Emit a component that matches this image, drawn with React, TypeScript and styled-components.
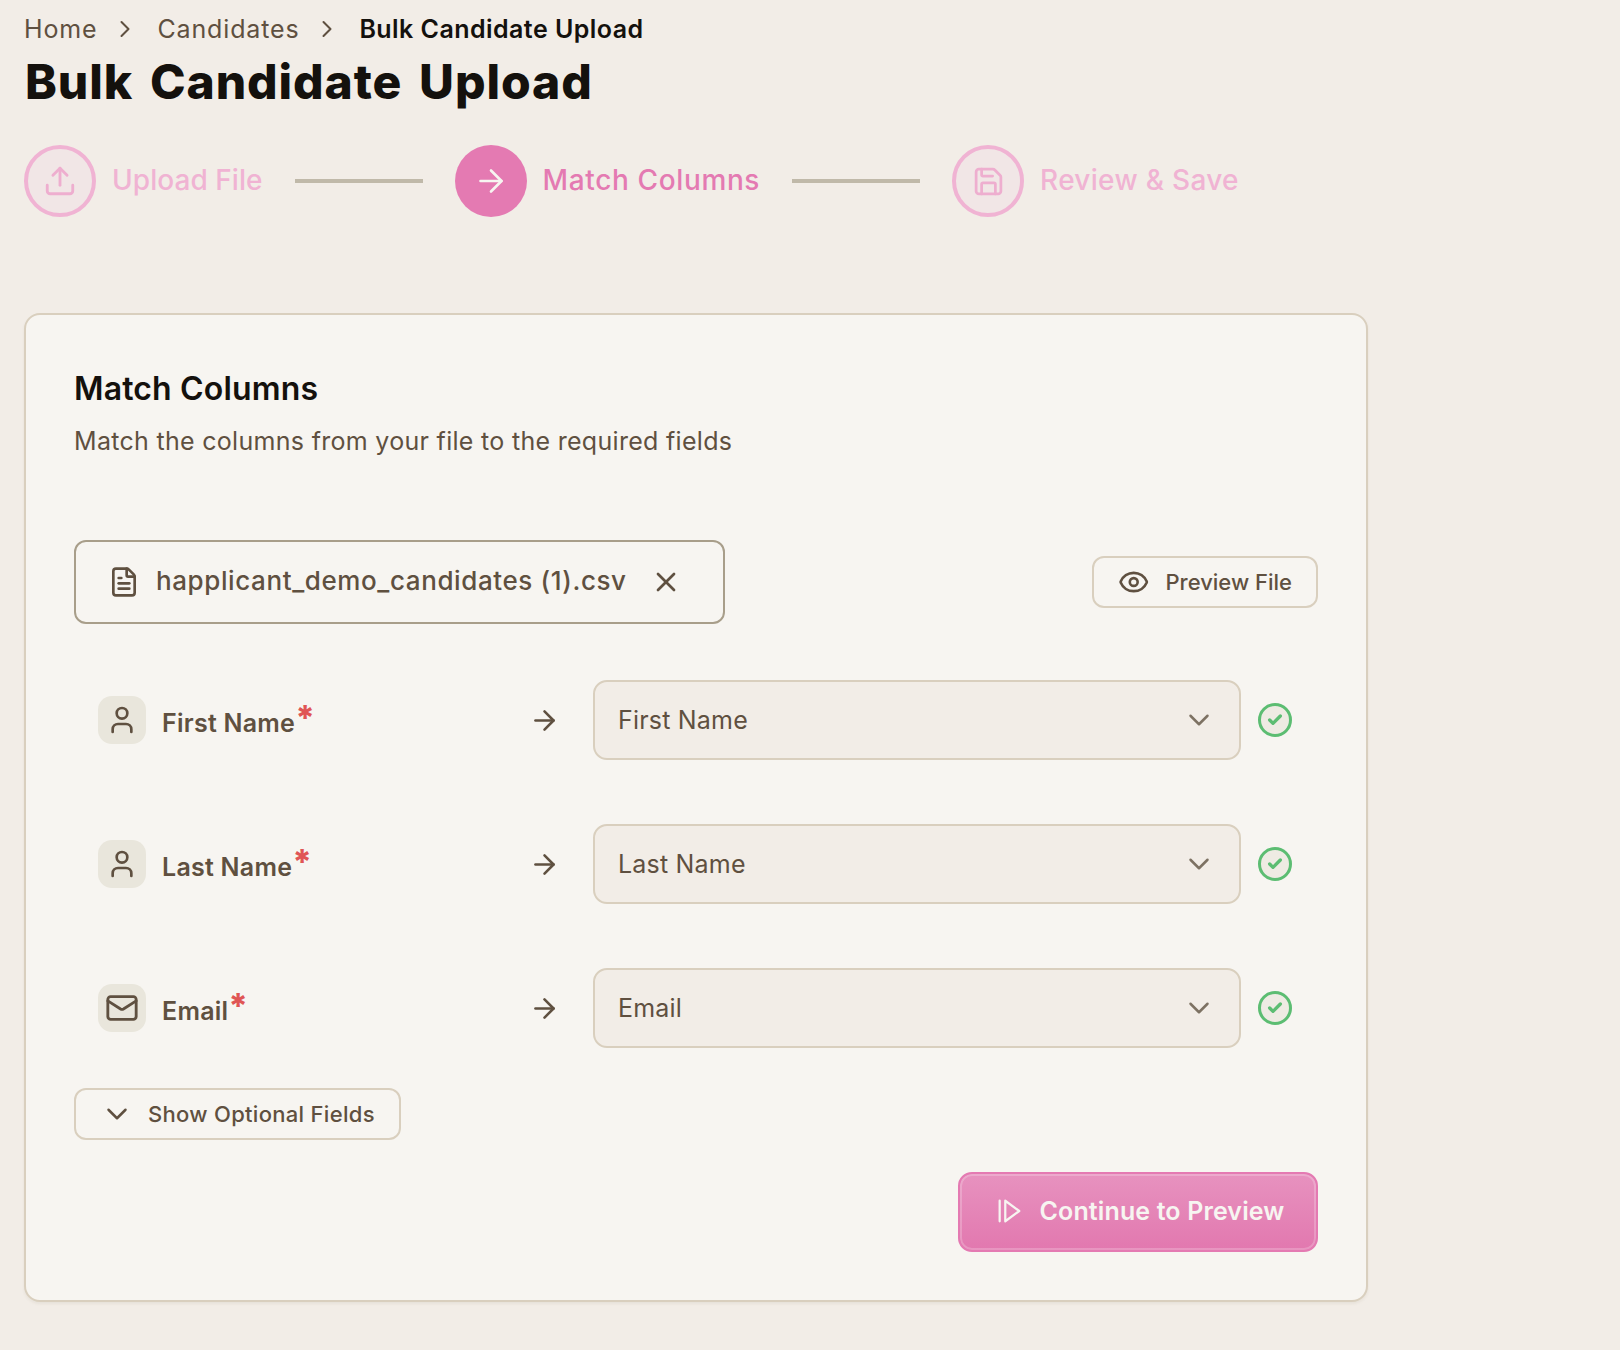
import styled, { createGlobalStyle } from 'styled-components'
import { ArrowRight, Check, ChevronDown, ChevronRight, Eye, FileText, Mail, Save, Upload, User, X } from 'lucide-react'
import type { ReactNode } from 'react'

const GlobalStyle = createGlobalStyle`
  html, body {
    margin: 0;
    background: #f2ede7;
    font-family: Inter, "Open Sans", sans-serif;
    color: #5f5040;
  }
  * { box-sizing: border-box; }
`

const Page = styled.div`
  width: 1620px;
  height: 1350px;
  padding: 12px 0 0 24px;
`

const Breadcrumb = styled.nav`
  display: flex;
  align-items: center;
  height: 34px;
  font-size: 25px;
`

const Crumb = styled.span<{ $current?: boolean }>`
  color: ${({ $current }) => ($current ? '#14110d' : '#5f5040')};
  font-weight: ${({ $current }) => ($current ? 600 : 400)};
  letter-spacing: ${({ $current }) => ($current ? 0.45 : 0.85)}px;
`

const CrumbSep = styled.span`
  display: flex;
  width: 60px;
  padding-right: 5px;
  justify-content: center;
`

const Title = styled.h1`
  margin: 6px 0 0;
  padding-left: 1px;
  height: 60px;
  font-size: 48px;
  line-height: 60px;
  font-weight: 800;
  letter-spacing: 0.9px;
  word-spacing: 5.5px;
  color: #14110d;
`

const Stepper = styled.div`
  display: flex;
  align-items: center;
  margin-top: 33px;
  height: 72px;
`

const StepCircle = styled.div<{ $active?: boolean }>`
  display: flex;
  align-items: center;
  justify-content: center;
  width: 72px;
  height: 72px;
  border-radius: 50%;
  color: ${({ $active }) => ($active ? '#f7f5f1' : '#eeaecf')};
  background: ${({ $active }) => ($active ? '#e47ab2' : '#f1e6e6')};
  border: ${({ $active }) => ($active ? 'none' : '4px solid #f0b3d3')};
`

const StepLabel = styled.span<{ $active?: boolean; $spacing: number }>`
  margin: 0 0 2px 16px;
  font-size: 28px;
  font-weight: 500;
  letter-spacing: ${({ $spacing }) => $spacing}px;
  color: ${({ $active }) => ($active ? '#e47ab2' : '#f0b3d3')};
`

const StepLine = styled.div`
  width: 128px;
  height: 4px;
  margin: 0 32px;
  background: #c0b9a9;
`

const Card = styled.section`
  width: 1344px;
  margin-top: 96px;
  padding: 54px 48px 48px;
  background: #f7f5f1;
  border: 2px solid #d9cfbe;
  border-radius: 16px;
  box-shadow: 0 2px 3px rgba(120, 100, 70, 0.08);
`

const CardTitle = styled.h2`
  margin: 0;
  font-size: 32px;
  line-height: 40px;
  font-weight: 600;
  letter-spacing: 0.15px;
  color: #14110d;
`

const CardText = styled.p`
  margin: 14px 0 0;
  font-size: 25px;
  line-height: 36px;
  letter-spacing: 0.3px;
`

const FileRow = styled.div`
  display: flex;
  align-items: center;
  justify-content: space-between;
  margin-top: 81px;
`

const FileChip = styled.div`
  display: flex;
  align-items: center;
  width: 651px;
  height: 84px;
  padding: 0 32px;
  border: 2px solid #a89e8a;
  border-radius: 12px;
  font-size: 26px;
  font-weight: 500;
  letter-spacing: 0.6px;
`

const FileName = styled.span`
  margin: 0 23px 0 16px;
  padding-bottom: 4px;
`

const OutlineButton = styled.button<{ $width: number; $gap: number; $spacing: number }>`
  display: flex;
  align-items: center;
  width: ${({ $width }) => $width}px;
  height: 52px;
  padding: 0 24px;
  gap: ${({ $gap }) => $gap}px;
  background: transparent;
  border: 2px solid #d9cfbe;
  border-radius: 12px;
  font: 500 22px Inter, sans-serif;
  letter-spacing: ${({ $spacing }) => $spacing}px;
  white-space: nowrap;
  color: #5f5040;
`

const FieldList = styled.div`
  display: flex;
  flex-direction: column;
  gap: 64px;
  margin-top: 56px;
`

const FieldRow = styled.div`
  display: flex;
  align-items: center;
  padding-left: 24px;
`

const FieldName = styled.div`
  display: flex;
  align-items: center;
  width: 431px;
  gap: 16px;
  font-size: 25px;
  font-weight: 600;
  letter-spacing: 0.25px;
`

const FieldText = styled.span`
  padding-bottom: 2px;
`

const IconBox = styled.div`
  display: flex;
  align-items: center;
  justify-content: center;
  width: 48px;
  height: 48px;
  border-radius: 14px;
  background: #e9e6dc;
`

const Required = styled.span`
  font-size: 34px;
  line-height: 1;
  font-weight: 800;
  color: #e05555;
  vertical-align: 2px;
`

const SelectBox = styled.div`
  display: flex;
  align-items: center;
  justify-content: space-between;
  width: 648px;
  height: 80px;
  margin-left: 33px;
  padding: 0 23px 0 23px;
  background: #f2ede7;
  border: 2px solid #d9cfbe;
  border-radius: 14px;
  font-size: 25px;
  letter-spacing: 0.2px;
`

const MatchedMark = styled.div`
  display: flex;
  align-items: center;
  justify-content: center;
  width: 34px;
  height: 34px;
  margin-left: 17px;
  border: 3px solid #5cbd72;
  border-radius: 50%;
  background: #eeebe3;
  color: #5cbd72;
`

const Footer = styled.div`
  display: flex;
  justify-content: flex-end;
  margin-top: 32px;
`

const ContinueButton = styled.button`
  display: flex;
  align-items: center;
  justify-content: center;
  gap: 17px;
  width: 360px;
  height: 80px;
  padding: 0 0 2px 3px;
  border: 2px solid #e47ab2;
  border-radius: 14px;
  background: linear-gradient(#e792bf, #e278af);
  box-shadow: inset 0 0 0 2px rgba(255, 255, 255, 0.22);
  font: 600 25px Inter, sans-serif;
  letter-spacing: 0.13px;
  color: #f7f5f1;
`

const OptionalRow = styled.div`
  margin-top: 40px;
`

interface Field {
  name: string
  icon: ReactNode
}

const fields: Field[] = [
  { name: 'First Name', icon: <User size={32} strokeWidth={2} /> },
  { name: 'Last Name', icon: <User size={32} strokeWidth={2} /> },
  { name: 'Email', icon: <Mail size={34} strokeWidth={2} /> },
]

const App = () => {
  return (
    <Page>
      <GlobalStyle />
      <Breadcrumb>
        <Crumb>Home</Crumb>
        <CrumbSep>
          <ChevronRight size={28} strokeWidth={1.75} />
        </CrumbSep>
        <Crumb>Candidates</Crumb>
        <CrumbSep>
          <ChevronRight size={28} strokeWidth={1.75} />
        </CrumbSep>
        <Crumb $current>Bulk Candidate Upload</Crumb>
      </Breadcrumb>
      <Title>Bulk Candidate Upload</Title>

      <Stepper>
        <StepCircle>
          <Upload size={34} strokeWidth={2} />
        </StepCircle>
        <StepLabel $spacing={0.05}>Upload File</StepLabel>
        <StepLine />
        <StepCircle $active>
          <ArrowRight size={36} strokeWidth={1.75} />
        </StepCircle>
        <StepLabel $active $spacing={0.63}>
          Match Columns
        </StepLabel>
        <StepLine />
        <StepCircle>
          <Save size={33} strokeWidth={2} />
        </StepCircle>
        <StepLabel $spacing={0.3}>Review &amp; Save</StepLabel>
      </Stepper>

      <Card>
        <CardTitle>Match Columns</CardTitle>
        <CardText>Match the columns from your file to the required fields</CardText>

        <FileRow>
          <FileChip>
            <FileText size={32} strokeWidth={2} />
            <FileName>happlicant_demo_candidates (1).csv</FileName>
            <X size={32} strokeWidth={2} />
          </FileChip>
          <OutlineButton $width={226} $gap={16} $spacing={0}>
            <Eye size={34} strokeWidth={2} />
            Preview File
          </OutlineButton>
        </FileRow>

        <FieldList>
          {fields.map((field) => (
            <FieldRow key={field.name}>
              <FieldName>
                <IconBox>{field.icon}</IconBox>
                <FieldText>
                  {field.name}
                  <Required>*</Required>
                </FieldText>
              </FieldName>
              <ArrowRight size={31} strokeWidth={2} />
              <SelectBox>
                {field.name}
                <ChevronDown size={34} strokeWidth={1.75} color="#7d7263" />
              </SelectBox>
              <MatchedMark>
                <Check size={16} strokeWidth={5} />
              </MatchedMark>
            </FieldRow>
          ))}
        </FieldList>

        <OptionalRow>
          <OutlineButton $width={327} $gap={14} $spacing={0.3}>
            <ChevronDown size={34} strokeWidth={1.75} />
            Show Optional Fields
          </OutlineButton>
        </OptionalRow>

        <Footer>
          <ContinueButton>
            <svg width="28" height="28" viewBox="0 0 30 30" fill="none" stroke="currentColor" strokeWidth="2.4" strokeLinejoin="round" strokeLinecap="round">
              <line x1="5" y1="4" x2="5" y2="26" />
              <polygon points="11,4 26,15 11,26" />
            </svg>
            Continue to Preview
          </ContinueButton>
        </Footer>
      </Card>
    </Page>
  )
}

export default App
